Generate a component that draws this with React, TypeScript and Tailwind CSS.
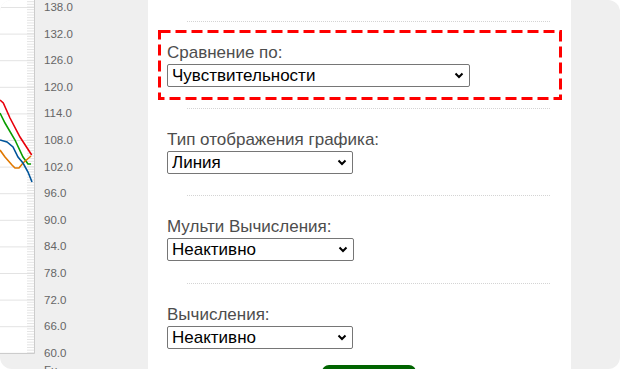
import React from 'react';

const labels = ['138.0', '132.0', '126.0', '120.0', '114.0', '108.0', '102.0', '96.0', '90.0', '84.0', '78.0', '72.0', '66.0', '60.0'];

function Chart() {
  const step = 26.6;
  const minor: number[] = [];
  for (let y = 7 - step; y <= 353; y += step / 10) {
    if (y >= 0) minor.push(y);
  }
  return (
    <svg width="148" height="369" className="block">
      <rect x="0" y="0" width="34.5" height="353" fill="#ffffff" />
      {labels.map((_, i) => (
        <line key={i} x1="0" x2="34" y1={7.5 + step * i} y2={7.5 + step * i} stroke="#e3e3e3" strokeWidth="1" />
      ))}
      {minor.map((y, i) => (
        <line key={i} x1="27" x2="34" y1={y} y2={y} stroke="#dddddd" strokeWidth="0.8" />
      ))}
      <line x1="34.5" x2="34.5" y1="0" y2="353.5" stroke="#cccccc" />
      <line x1="0" x2="34.5" y1="353.5" y2="353.5" stroke="#cccccc" />
      <polyline points="0,100 3.3,103 10,118 20,137 31.7,155" fill="none" stroke="#e8000b" strokeWidth="1.6" />
      <polyline points="0,113 5,123 15,140 23,157 28,164 31,164" fill="none" stroke="#0a9e00" strokeWidth="1.6" />
      <polyline points="0,150 5,157 12,165 15,168 19,168 23,163 31,156" fill="none" stroke="#e07800" strokeWidth="1.6" />
      <polyline points="0,140 7,142 13,147 18,157 23,163 28,172 32,182" fill="none" stroke="#00559a" strokeWidth="1.6" />
      {labels.map((l, i) => (
        <text key={l} x="44" y={7 + step * i + 4} fontSize="11.5" fill="#666666" fontFamily="'Liberation Sans', Arial, sans-serif">
          {l}
        </text>
      ))}
      <text x="44" y="374" fontSize="11.5" fill="#666666" fontFamily="'Liberation Sans', Arial, sans-serif">Fu</text>
    </svg>
  );
}

function Chevron() {
  return (
    <svg width="10" height="7" viewBox="0 0 10 7" className="pointer-events-none absolute right-[6px] top-[8px]">
      <path d="M1.5 1.5 L5 5 L8.5 1.5" fill="none" stroke="#000" strokeWidth="2" />
    </svg>
  );
}

function Select({ value, width }: { value: string; width: string }) {
  return (
    <div className={`relative mt-[2px] h-[23px] ${width}`}>
      <select
        defaultValue={value}
        className="block h-full w-full appearance-none rounded-[2px] border border-[#767676] bg-white pl-[4px] text-[17px] leading-[21px] text-black"
      >
        <option>{value}</option>
      </select>
      <Chevron />
    </div>
  );
}

function Sep({ className = '' }: { className?: string }) {
  return <div className={`ml-[39px] mr-[21px] h-0 border-t border-dotted border-[#d4d4d4] ${className}`} />;
}

function Label({ children }: { children: React.ReactNode }) {
  return <div className="text-[17px] leading-[19px] text-[#4d4d4d]">{children}</div>;
}

export default function App() {
  return (
    <div className="h-[369px] w-[620px] bg-white" style={{ fontFamily: "'Liberation Sans', Arial, sans-serif" }}>
      <div className="flex h-full w-full overflow-hidden rounded-[12px]">
        <div className="w-[148px] shrink-0 bg-[#efefef]">
          <Chart />
        </div>

        <div className="w-[423px] shrink-0 bg-white pt-[21px]">
          <Sep />

          <div className="relative ml-[10px] mr-[9px] mt-[8px] h-[70px] pl-[9px] pt-[13px]">
            <svg className="pointer-events-none absolute inset-0" width="404" height="70">
              <rect x="1.5" y="1.5" width="401" height="67" fill="none" stroke="#ff0000" strokeWidth="3" strokeDasharray="11 5" />
            </svg>
            <Label>Сравнение по:</Label>
            <Select value="Чувствительности" width="w-[303px]" />
          </div>

          <Sep className="mt-[8px]" />

          <div className="pl-[19px] pt-[21px]">
            <Label>Тип отображения графика:</Label>
            <Select value="Линия" width="w-[186px]" />
          </div>

          <Sep className="mt-[21px]" />

          <div className="pl-[19px] pt-[21px]">
            <Label>Мульти Вычисления:</Label>
            <Select value="Неактивно" width="w-[187px]" />
          </div>

          <Sep className="mt-[22px]" />

          <div className="pl-[19px] pt-[21px]">
            <Label>Вычисления:</Label>
            <Select value="Неактивно" width="w-[186px]" />
          </div>

          <div className="ml-[174px] mt-[16px] h-[30px] w-[94px] rounded-[7px] bg-[#006400]" />
        </div>

        <div className="flex-1 bg-[#efefef]" />
      </div>
    </div>
  );
}
